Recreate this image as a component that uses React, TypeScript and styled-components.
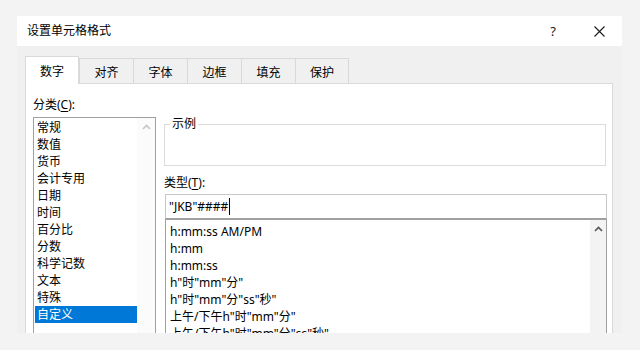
import React from "react";
import styled, { createGlobalStyle } from "styled-components";

const FONT = `"Noto Sans", "Noto Sans CJK SC", sans-serif`;

const GlobalStyle = createGlobalStyle`
  html, body { margin: 0; padding: 0; background: #f3f3f3; }
  body { font-family: ${FONT}; font-size: 12px; color: #000; }
  #root { width: 640px; height: 350px; overflow: hidden; }
`;

const Page = styled.div`
  width: 640px;
  height: 350px;
  background: #f3f3f3;
  padding: 16px 18px 0 17px;
  box-sizing: border-box;
`;

const Dialog = styled.div`
  width: 605px;
  height: 317px;
  display: flex;
  flex-direction: column;
  overflow: hidden;
  background: #f0f0f0;
`;

const TitleBar = styled.div`
  height: 30px;
  flex: none;
  background: #fff;
  display: flex;
  align-items: center;
  padding-left: 10px;
`;

const Title = styled.div`
  font-size: 12px;
  line-height: 16px;
  color: #000;
  flex: 1;
`;

const TitleButton = styled.div`
  width: 46px;
  height: 30px;
  display: flex;
  align-items: center;
  justify-content: center;
  font-size: 13px;
  color: #1a1a1a;
`;

const Body = styled.div`
  flex: 1;
  display: flex;
  flex-direction: column;
  padding: 10px 9px 0 8px;
  min-height: 0;
`;

const TabRow = styled.div`
  display: flex;
  align-items: flex-end;
  height: 27px;
  flex: none;
  position: relative;
  z-index: 1;
`;

const Tab = styled.div<{ $active?: boolean; $last?: boolean }>`
  width: 54px;
  box-sizing: border-box;
  height: ${(p) => (p.$active ? "28px" : "25px")};
  margin-bottom: ${(p) => (p.$active ? "-1px" : "0")};
  background: ${(p) => (p.$active ? "#fff" : "#f0f0f0")};
  border-top: 1px solid #d9d9d9;
  border-left: 1px solid #d9d9d9;
  border-right: ${(p) => (p.$active || p.$last ? "1px solid #d9d9d9" : "none")};
  display: flex;
  align-items: center;
  justify-content: center;
  font-size: 12px;
  color: #000;
  padding-top: ${(p) => (p.$active ? "0" : "1px")};
`;

const Panel = styled.div`
  flex: 1;
  background: #fff;
  border: 1px solid #d9d9d9;
  border-bottom: none;
  padding: 13px 5px 0 7px;
  display: grid;
  grid-template-columns: 123px 443px;
  column-gap: 8px;
  align-items: start;
  min-height: 0;
`;

const Column = styled.div`
  display: flex;
  flex-direction: column;
`;

const Label = styled.div`
  font-size: 12px;
  line-height: 16px;
  color: #000;
  u { text-decoration: underline; text-underline-offset: 2px; }
`;

const ListBox = styled.div<{ $top?: number }>`
  border: 1px solid #a0a0a0;
  display: flex;
  height: 240px;
  box-sizing: border-box;
`;

const ListItems = styled.div<{ $pad: number }>`
  flex: 1;
  padding-top: ${(p) => p.$pad}px;
  padding-left: 1px;
  display: flex;
  flex-direction: column;
`;

const Item = styled.div<{ $selected?: boolean; $indent: number }>`
  height: 17px;
  line-height: 17px;
  font-size: 12px;
  padding-left: ${(p) => p.$indent}px;
  white-space: nowrap;
  background: ${(p) => (p.$selected ? "#0078d7" : "transparent")};
  color: ${(p) => (p.$selected ? "#fff" : "#000")};
`;

const ScrollTrack = styled.div<{ $bg: string; $w: number }>`
  width: ${(p) => p.$w}px;
  background: ${(p) => p.$bg};
  display: flex;
  justify-content: center;
  padding-top: 6px;
  box-sizing: border-box;
`;

const SampleGroup = styled.fieldset`
  margin: 21px 1px 0 0;
  padding: 0;
  border: 1px solid #dcdcdc;
  min-width: 0;
`;

const Legend = styled.legend`
  margin-left: 5px;
  padding: 0 2px;
  font-size: 12px;
  line-height: 12px;
  color: #000;
`;

const SampleArea = styled.div`
  height: 35px;
`;

const TypeLabel = styled(Label)`
  margin-top: 9px;
`;

const TypeInput = styled.div`
  margin: 3px 0 0 1px;
  height: 25px;
  box-sizing: border-box;
  border: 1px solid #c8c8c8;
  border-bottom: 1px solid #a0a0a0;
  display: flex;
  align-items: center;
  padding-left: 3px;
  font-size: 12px;
  color: #000;
`;

const Caret = styled.span`
  display: inline-block;
  width: 1px;
  height: 17px;
  background: #000;
  margin-left: 1px;
`;

const TypeList = styled(ListBox)`
  margin-left: 1px;
  border-top: 1px solid #a0a0a0;
  height: 130px;
`;

const Chevron = ({ color }: { color: string }) => (
  <svg width="9" height="6" viewBox="0 0 9 6">
    <path d="M1 5 L4.5 1.5 L8 5" fill="none" stroke={color} strokeWidth="1.6" />
  </svg>
);

const CloseIcon = () => (
  <svg width="11" height="11" viewBox="0 0 11 11">
    <path d="M0.5 0.5 L10.5 10.5 M10.5 0.5 L0.5 10.5" stroke="#1a1a1a" strokeWidth="1.1" />
  </svg>
);

const tabs = ["数字", "对齐", "字体", "边框", "填充", "保护"];
const categories = [
  "常规",
  "数值",
  "货币",
  "会计专用",
  "日期",
  "时间",
  "百分比",
  "分数",
  "科学记数",
  "文本",
  "特殊",
  "自定义",
];
const types = [
  "h:mm:ss AM/PM",
  "h:mm",
  "h:mm:ss",
  'h"时"mm"分"',
  'h"时"mm"分"ss"秒"',
  '上午/下午h"时"mm"分"',
  '上午/下午h"时"mm"分"ss"秒"',
];

export default function App() {
  return (
    <>
      <GlobalStyle />
      <Page>
        <Dialog>
          <TitleBar>
            <Title>设置单元格格式</Title>
            <TitleButton>?</TitleButton>
            <TitleButton>
              <CloseIcon />
            </TitleButton>
          </TitleBar>
          <Body>
            <TabRow>
              {tabs.map((t, i) => (
                <Tab key={t} $active={i === 0} $last={i === tabs.length - 1}>
                  {t}
                </Tab>
              ))}
            </TabRow>
            <Panel>
              <Column>
                <Label>
                  分类(<u>C</u>):
                </Label>
                <ListBox style={{ marginTop: 4 }}>
                  <ListItems $pad={1}>
                    {categories.map((c) => (
                      <Item key={c} $indent={2} $selected={c === "自定义"}>
                        {c}
                      </Item>
                    ))}
                  </ListItems>
                  <ScrollTrack $bg="#fbfbfb" $w={18}>
                    <Chevron color="#c4c4c4" />
                  </ScrollTrack>
                </ListBox>
              </Column>
              <Column>
                <SampleGroup>
                  <Legend>示例</Legend>
                  <SampleArea />
                </SampleGroup>
                <TypeLabel>
                  类型(<u>T</u>):
                </TypeLabel>
                <TypeInput>
                  "JKB"####
                  <Caret />
                </TypeInput>
                <TypeList>
                  <ListItems $pad={3}>
                    {types.map((t) => (
                      <Item key={t} $indent={3}>
                        {t}
                      </Item>
                    ))}
                  </ListItems>
                  <ScrollTrack $bg="#f3f3f3" $w={16}>
                    <Chevron color="#555" />
                  </ScrollTrack>
                </TypeList>
              </Column>
            </Panel>
          </Body>
        </Dialog>
      </Page>
    </>
  );
}
